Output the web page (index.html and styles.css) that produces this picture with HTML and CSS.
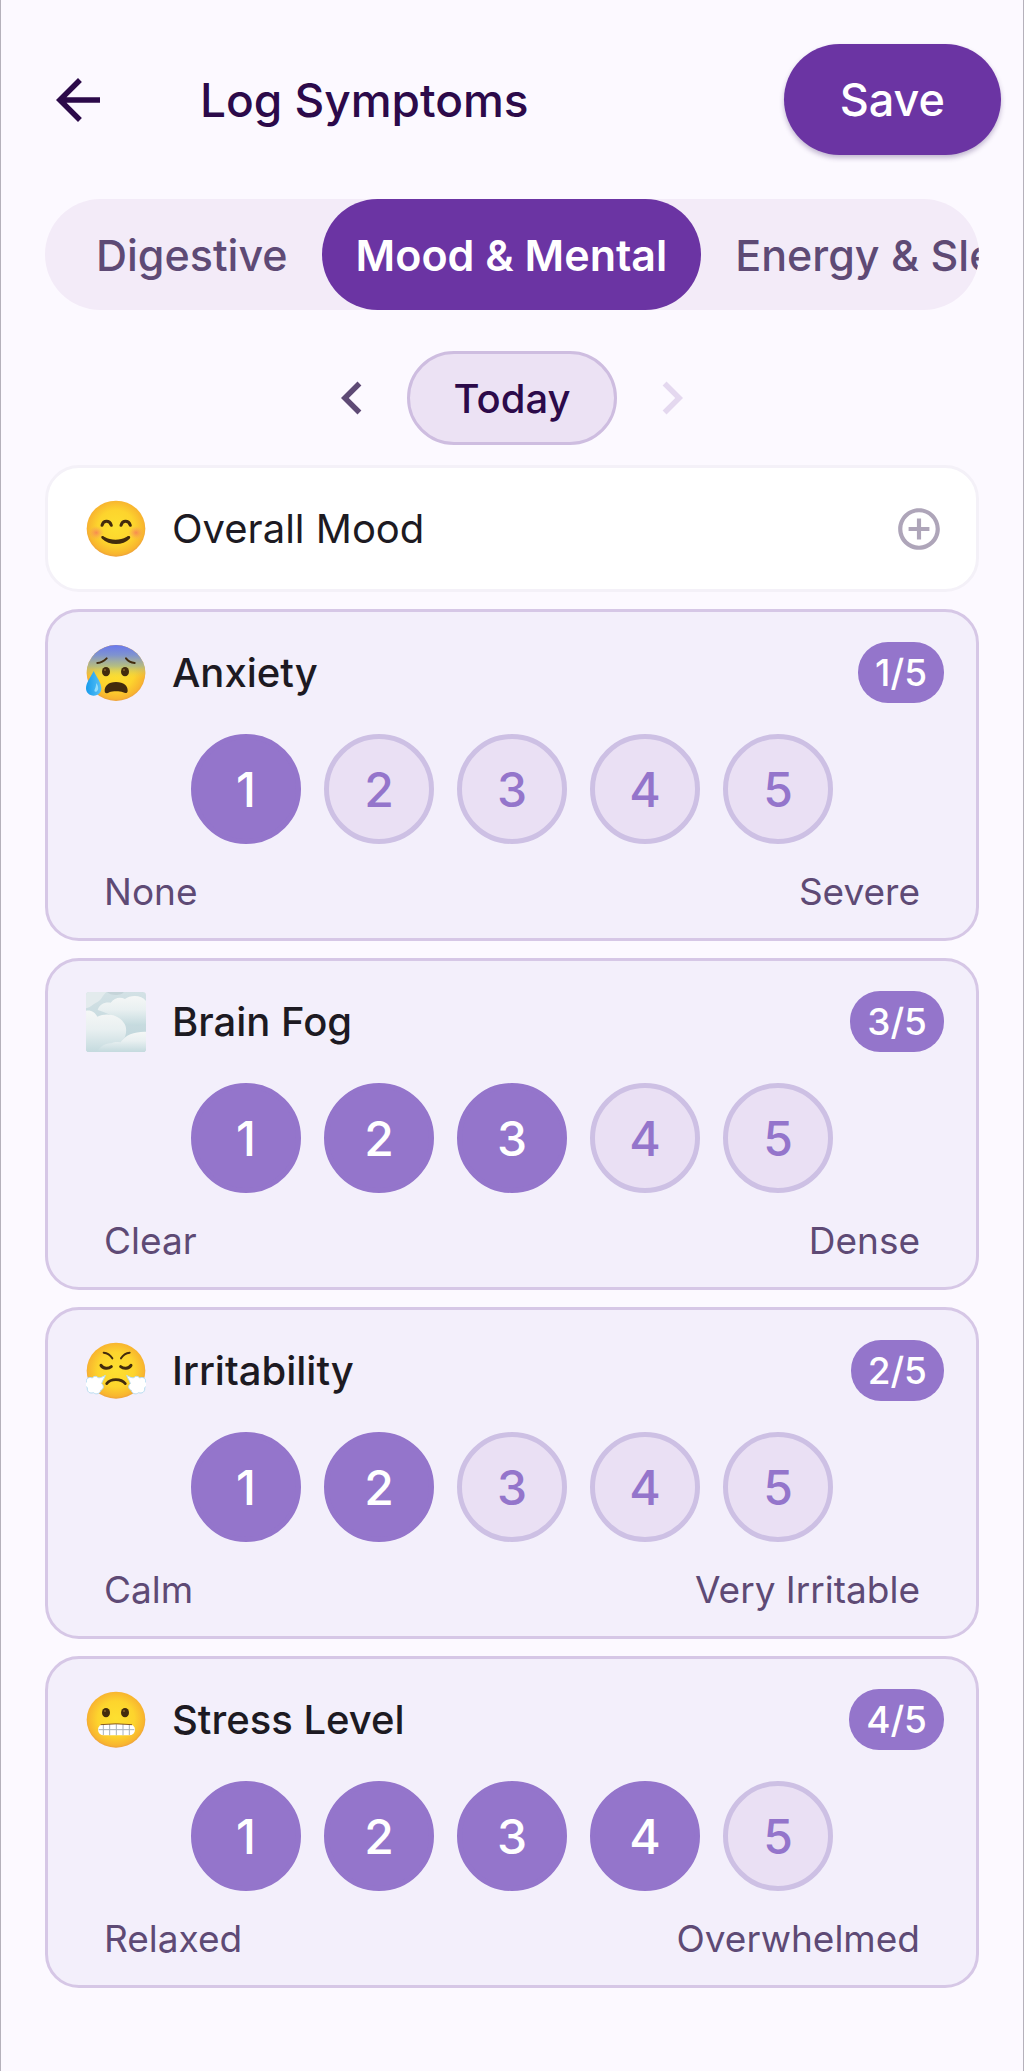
FILE: index.html
```html
<!DOCTYPE html>
<html lang="en">
    <head>
        <meta charset="utf-8">
        <meta name="viewport" content="width=device-width, initial-scale=1">
        <title>Log Symptoms</title>
        <link rel="stylesheet" href="styles.css">
    </head>
    <body>
        <!-- shared gradients for the face icons -->
        <svg class="defs" width="0" height="0" aria-hidden="true">
            <defs>
                <radialGradient id="face" cx="50%" cy="48%" r="52%">
                    <stop offset="0" stop-color="#fde030"/>
                    <stop offset="0.6" stop-color="#fdd42d"/>
                    <stop offset="0.92" stop-color="#f8b52f"/>
                    <stop offset="1" stop-color="#eda13c"/>
                </radialGradient>
                <radialGradient id="cheek">
                    <stop offset="0" stop-color="#f6765a" stop-opacity="0.75"/>
                    <stop offset="1" stop-color="#f6966a" stop-opacity="0"/>
                </radialGradient>
                <linearGradient id="cold" x1="0" y1="0" x2="0" y2="1">
                    <stop offset="0" stop-color="#6a78ee"/>
                    <stop offset="0.18" stop-color="#7f93cf"/>
                    <stop offset="0.38" stop-color="#a9b98f" stop-opacity="0.85"/>
                    <stop offset="0.6" stop-color="#f3da3a" stop-opacity="0"/>
                </linearGradient>
                <linearGradient id="drop" x1="0" y1="0" x2="1" y2="0">
                    <stop offset="0" stop-color="#189bec"/>
                    <stop offset="1" stop-color="#58c1f6"/>
                </linearGradient>
                <linearGradient id="sky" x1="0" y1="0" x2="0" y2="1">
                    <stop offset="0" stop-color="#d3e1e5"/>
                    <stop offset="1" stop-color="#bdd5da"/>
                </linearGradient>
                <linearGradient id="cloud" x1="0" y1="0" x2="0" y2="1">
                    <stop offset="0" stop-color="#f5f7f6"/>
                    <stop offset="0.45" stop-color="#e9f0f1"/>
                    <stop offset="1" stop-color="#c4dade"/>
                </linearGradient>
            </defs>
        </svg>

        <header class="header">
            <button class="back" type="button" aria-label="Back">
                <svg viewBox="0 0 24 24" aria-hidden="true"><path d="M20 11H7.830l5.590-5.590L12 4l-8 8 8 8 1.410-1.410L7.830 13H20z"/></svg>
            </button>
            <h1>Log Symptoms</h1>
            <button class="save" type="button">Save</button>
        </header>

        <main>
            <nav class="tabs">
                <button class="tab" type="button">Digestive</button>
                <button class="tab active" type="button">Mood &amp; Mental</button>
                <button class="tab" type="button">Energy &amp; Sleep</button>
            </nav>

            <div class="day">
                <button class="arrow" type="button" aria-label="Previous day">
                    <svg viewBox="0 0 24 24" aria-hidden="true"><path d="M15.410 7.410L14 6l-6 6 6 6 1.410-1.410L10.830 12z"/></svg>
                </button>
                <button class="today" type="button">Today</button>
                <button class="arrow" type="button" aria-label="Next day" disabled>
                    <svg viewBox="0 0 24 24" aria-hidden="true"><path d="M10 6L8.590 7.410 13.170 12l-4.580 4.590L10 18l6-6z"/></svg>
                </button>
            </div>

            <div class="list">
                <section class="card empty">
                    <div class="head">
                        <svg class="emoji" viewBox="46 42 180 180" aria-hidden="true">
                            <ellipse cx="136" cy="131" rx="88" ry="84" fill="url(#face)"/>
                            <ellipse cx="77" cy="143" rx="23" ry="20" fill="url(#cheek)"/>
                            <ellipse cx="196" cy="143" rx="23" ry="20" fill="url(#cheek)"/>
                            <path d="M94 121c4-16 23-16 28 0M151 121c4-16 23-16 28 0" fill="none" stroke="#422b0d" stroke-width="9" stroke-linecap="round"/>
                            <path d="M94 153c-3 2-3 5 0 8 21 21 64 21 83 0 3-4 2-7-2-8-3-1-5 1-8 3-19 11-46 11-65 0-3-2-5-4-8-3z" fill="#422b0d"/>
                        </svg>
                        <h2>Overall Mood</h2>
                        <button class="add" type="button" aria-label="Add Overall Mood">
                            <svg viewBox="0 0 24 24" aria-hidden="true"><path d="M13 7h-2v4H7v2h4v4h2v-4h4v-2h-4V7zm-1-5C6.480 2 2 6.480 2 12s4.480 10 10 10 10-4.480 10-10S17.520 2 12 2zm0 18c-4.410 0-8-3.590-8-8s3.590-8 8-8 8 3.590 8 8-3.590 8-8 8z"/></svg>
                        </button>
                    </div>
                </section>

                <section class="card">
                    <div class="head">
                        <svg class="emoji" viewBox="46 38 180 180" aria-hidden="true">
                            <ellipse cx="136" cy="128" rx="88" ry="84" fill="url(#face)"/>
                            <ellipse cx="136" cy="128" rx="88" ry="84" fill="url(#cold)"/>
                            <path d="M80 98c11-1 20-6 28-14M192 98c-11-1-20-6-26-14" fill="none" stroke="#422b0d" stroke-width="6" stroke-linecap="round"/>
                            <ellipse cx="106" cy="124" rx="12" ry="14" fill="#422b0d"/>
                            <ellipse cx="163" cy="124" rx="12" ry="14" fill="#422b0d"/>
                            <circle cx="103" cy="119" r="3" fill="#896024"/>
                            <circle cx="160" cy="119" r="3" fill="#896024"/>
                            <path d="M136 155c-24 0-34 12-34 27 0 8 8 8 14 4 10-4 31-4 41 0 8 4 14 3 14-5 0-15-11-26-35-26z" fill="#422b0d"/>
                            <path d="M69 122c-9 18-23 35-23 52 0 13 10 22 23 22 14 0 23-9 23-22 0-17-14-34-23-52z" fill="url(#drop)"/>
                            <path d="M77 158c8 12 7 22 0 26-6 2-7-4-4-9 3-6 3-11 4-17z" fill="#93dcfb"/>
                        </svg>
                        <h2>Anxiety</h2>
                        <span class="badge">1/5</span>
                    </div>
                    <div class="scale">
                        <button class="dot on" type="button">1</button>
                        <button class="dot" type="button">2</button>
                        <button class="dot" type="button">3</button>
                        <button class="dot" type="button">4</button>
                        <button class="dot" type="button">5</button>
                    </div>
                    <div class="ends"><span>None</span><span>Severe</span></div>
                </section>

                <section class="card">
                    <div class="head">
                        <svg class="emoji" viewBox="47 38 180 180" aria-hidden="true">
                            <clipPath id="tile"><rect x="47" y="38" width="180" height="180" rx="10"/></clipPath>
                            <g clip-path="url(#tile)">
                                <rect x="47" y="38" width="180" height="180" fill="url(#sky)"/>
                                <path d="M47 38h62c-13 10-15 24-29 31-12 5-17 15-33 18z" fill="#e3ebed"/>
                                <path d="M110 38h50c-4 11-40 13-50 0z" fill="#c5d4d9"/>
                                <path d="M82 92c5-17 21-25 39-22 12-15 28-18 43-11 16-13 50-13 63 6v70c-17 7-44 4-62-1-26-22-51-31-83-42z" fill="url(#cloud)"/>
                                <path d="M47 94c18-2 27 6 34 18 28-13 65-5 80 19 7 10 9 24 3 42l-40 45H47z" fill="url(#cloud)"/>
                                <path d="M80 218c9-15 24-27 43-26 9-5 19-5 27-3 15-23 44-33 77-32v61z" fill="url(#cloud)"/>
                            </g>
                        </svg>
                        <h2>Brain Fog</h2>
                        <span class="badge">3/5</span>
                    </div>
                    <div class="scale">
                        <button class="dot on" type="button">1</button>
                        <button class="dot on" type="button">2</button>
                        <button class="dot on" type="button">3</button>
                        <button class="dot" type="button">4</button>
                        <button class="dot" type="button">5</button>
                    </div>
                    <div class="ends"><span>Clear</span><span>Dense</span></div>
                </section>

                <section class="card">
                    <div class="head">
                        <svg class="emoji" viewBox="46 34 180 180" aria-hidden="true">
                            <ellipse cx="136" cy="123" rx="88" ry="84" fill="url(#face)"/>
                            <path d="M99 69c13 1 20 7 26 17M177 69c-13 1-20 7-26 17" fill="none" stroke="#422b0d" stroke-width="6" stroke-linecap="round"/>
                            <path d="M91 107c7 11 22 11 31 4M181 107c-7 11-22 11-31 4" fill="none" stroke="#422b0d" stroke-width="9" stroke-linecap="round"/>
                            <path d="M108 162c12-16 43-16 56 0" fill="none" stroke="#422b0d" stroke-width="8" stroke-linecap="round"/>
                            <g fill="#fff" stroke="#b7dcf1" stroke-width="3" stroke-linejoin="round">
                                <path d="M104 137c-9 6-16 8-22 7-4-6-13-5-17 1-10-5-20 2-18 12-5 5-4 14 3 17-2 12 8 19 18 15 8 7 21 3 22-7 9-3 11-14 3-20 1-7 7-13 11-25z"/>
                                <path d="M168 137c9 6 16 8 22 7 4-6 13-5 17 1 10-5 20 2 18 12 5 5 4 14-3 17 2 12-8 19-18 15-8 7-21 3-22-7-9-3-11-14-3-20-1-7-7-13-11-25z"/>
                            </g>
                        </svg>
                        <h2>Irritability</h2>
                        <span class="badge">2/5</span>
                    </div>
                    <div class="scale">
                        <button class="dot on" type="button">1</button>
                        <button class="dot on" type="button">2</button>
                        <button class="dot" type="button">3</button>
                        <button class="dot" type="button">4</button>
                        <button class="dot" type="button">5</button>
                    </div>
                    <div class="ends"><span>Calm</span><span>Very Irritable</span></div>
                </section>

                <section class="card">
                    <div class="head">
                        <svg class="emoji" viewBox="46 31 180 180" aria-hidden="true">
                            <ellipse cx="136" cy="120" rx="88" ry="84" fill="url(#face)"/>
                            <ellipse cx="106" cy="99" rx="12" ry="14" fill="#422b0d"/>
                            <ellipse cx="163" cy="99" rx="12" ry="14" fill="#422b0d"/>
                            <circle cx="103" cy="94" r="3" fill="#896024"/>
                            <circle cx="160" cy="94" r="3" fill="#896024"/>
                            <rect x="82" y="133" width="111" height="34" rx="17" fill="#fff"/>
                            <path d="M84 150h107M98 134v32M117 133v34M137 133v34M157 133v34M176 134v32" stroke="#a7b1ba" stroke-width="3" fill="none"/>
                            <path d="M90 135q46-5 94 0" stroke="#8a5a1c" stroke-width="3" fill="none"/>
                        </svg>
                        <h2>Stress Level</h2>
                        <span class="badge">4/5</span>
                    </div>
                    <div class="scale">
                        <button class="dot on" type="button">1</button>
                        <button class="dot on" type="button">2</button>
                        <button class="dot on" type="button">3</button>
                        <button class="dot on" type="button">4</button>
                        <button class="dot" type="button">5</button>
                    </div>
                    <div class="ends"><span>Relaxed</span><span>Overwhelmed</span></div>
                </section>
            </div>
        </main>
    </body>
</html>
```

FILE: styles.css
```css
* {
    box-sizing: border-box;
}
html {
    background: #fcf9ff;
}
body {
    margin: 0;
    min-height: 100vh;
    border: solid #b5b1bb;
    border-width: 0 1px;
    font-family: Inter, "Liberation Sans", sans-serif;
    color: #1d1a22;
}
button {
    margin: 0;
    padding: 0;
    border: 0;
    background: none;
    font: inherit;
    color: inherit;
    white-space: nowrap;
    cursor: pointer;
}
svg {
    display: block;
    fill: currentColor;
}
.defs {
    position: absolute;
}

/* top bar */
.header {
    display: flex;
    align-items: center;
    padding: 44px 22px 0 44px;
    color: #2c0a4a;
}
.back svg {
    width: 66px;
    height: 66px;
}
.header h1 {
    flex: 1;
    margin: 0 0 0 89px;
    font-size: 46px;
    font-weight: 500;
}
.save {
    height: 111px;
    padding: 0 56px;
    border-radius: 56px;
    background: #6b34a3;
    box-shadow: 0 3px 5px rgba(60, 30, 100, 0.3);
    color: #fff;
    font-size: 45px;
    font-weight: 500;
}

main {
    padding: 44px 44px 82px;
}

.tabs {
    display: flex;
    height: 111px;
    padding: 0 17px;
    border-radius: 56px;
    background: #f3ebf8;
    overflow: hidden;
}
.tab {
    flex: none;
    padding: 0 34px;
    border-radius: 56px;
    color: #5e4a75;
    font-size: 43px;
    font-weight: 500;
}
.tab.active {
    background: #6b34a3;
    color: #fff;
    font-weight: 600;
}

/* day switcher */
.day {
    display: flex;
    justify-content: center;
    align-items: center;
    gap: 22px;
    margin: 41px 0 20px;
}
.arrow {
    color: #5e4a75;
}
.arrow:disabled {
    color: #e4d8ef;
}
.arrow svg {
    width: 66px;
    height: 66px;
}
.today {
    height: 94px;
    padding: 0 44px;
    border: 3px solid #cebde0;
    border-radius: 47px;
    background: #ece2f4;
    color: #2c0a4a;
    font-size: 40px;
    font-weight: 500;
}

/* symptom cards */
.list {
    display: flex;
    flex-direction: column;
    gap: 17px;
}
.card {
    padding: 30px 32px 22px;
    border: 3px solid #d6c7e6;
    border-radius: 34px;
    background: #f3effb;
}
.card.empty {
    padding-bottom: 30px;
    border-color: #f4f1f8;
    background: #fff;
}
.head {
    display: flex;
    align-items: center;
    min-height: 61px;
    padding-left: 6px;
}
.emoji {
    flex: none;
    width: 60px;
    height: 60px;
}
.head h2 {
    flex: 1;
    margin: 0 0 0 26px;
    font-size: 40px;
    font-weight: 500;
}
.empty h2 {
    font-weight: 400;
}
.add {
    color: #aea5b9;
}
.add svg {
    width: 50px;
    height: 50px;
}
.badge {
    padding: 0 17px;
    border-radius: 30px;
    background: #9475cb;
    color: #fff;
    font-size: 37px;
    font-weight: 500;
    line-height: 61px;
}
.scale {
    display: flex;
    justify-content: center;
    gap: 23px;
    margin: 31px 0 24px;
}
.dot {
    width: 110px;
    height: 110px;
    border: 5px solid #cdc0e4;
    border-radius: 50%;
    background: #eae0f4;
    color: #9475cb;
    font-size: 48px;
    font-weight: 500;
}
.dot.on {
    border-color: #9475cb;
    background: #9475cb;
    color: #fff;
}
.ends {
    display: flex;
    justify-content: space-between;
    padding: 0 24px;
    color: #5e4a75;
    font-size: 37px;
    line-height: 48px;
}
```
